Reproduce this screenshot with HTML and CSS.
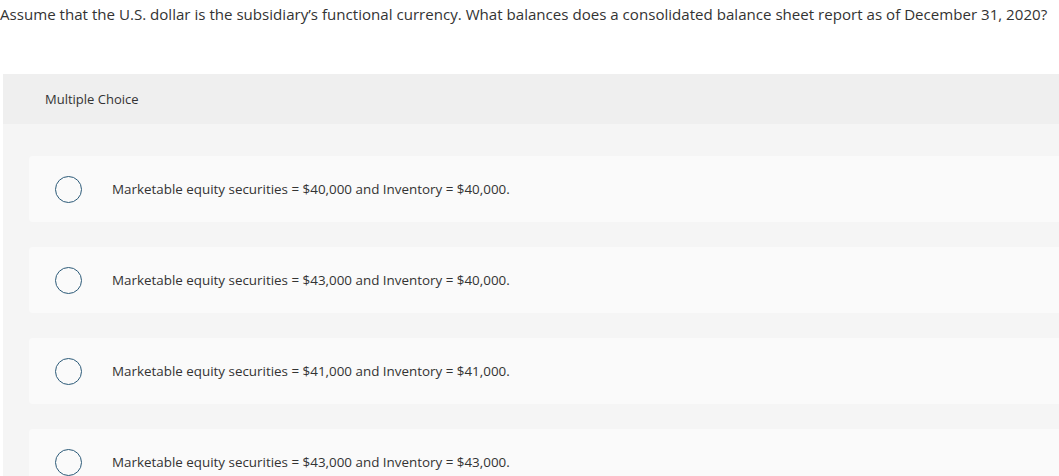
FILE: index.html
```html
<!DOCTYPE html>
<html>
<head>
<meta charset="utf-8">
<link rel="stylesheet" href="styles.css">
</head>
<body>
<p class="question">Assume that the U.S. dollar is the subsidiary’s functional currency. What balances does a consolidated balance sheet report as of December 31, 2020?</p>
<div class="mc">
  <div class="mc-header">Multiple Choice</div>
  <div class="mc-body">
    <div class="option"><span class="radio"></span><span class="label">Marketable equity securities = $40,000 and Inventory = $40,000.</span></div>
    <div class="option"><span class="radio"></span><span class="label">Marketable equity securities = $43,000 and Inventory = $40,000.</span></div>
    <div class="option"><span class="radio"></span><span class="label">Marketable equity securities = $41,000 and Inventory = $41,000.</span></div>
    <div class="option"><span class="radio"></span><span class="label">Marketable equity securities = $43,000 and Inventory = $43,000.</span></div>
  </div>
</div>
</body>
</html>
```
FILE: styles.css
```css
html, body {
  margin: 0;
  padding: 0;
  background: #ffffff;
  overflow: hidden;
}
body {
  font-family: "Open Sans", Lato, sans-serif;
  color: #333333;
}
.question {
  margin: 0;
  padding: 4px 0 0 0;
  font-size: 15.1px;
  line-height: 20px;
  white-space: nowrap;
}
.mc {
  margin: 50px 0 0 3px;
  background: #f5f5f5;
}
.mc-header {
  background: #efefef;
  height: 50px;
  box-sizing: border-box;
  padding: 17px 0 0 42px;
  font-size: 13px;
  line-height: 16px;
}
.mc-body {
  padding: 32px 0 0 26px;
  display: flex;
  flex-direction: column;
  gap: 25px;
}
.option {
  background: #fafafa;
  height: 66px;
  display: flex;
  align-items: center;
  padding-left: 26px;
  border-radius: 4px 0 0 4px;
}
.radio {
  border: 1.5px solid #2c5a78;
  border-radius: 50%;
  box-sizing: border-box;
  flex: none;
  width: 27px;
  height: 27px;
}
.label {
  margin-left: 30px;
  font-size: 13.4px;
  line-height: 16px;
}
```
